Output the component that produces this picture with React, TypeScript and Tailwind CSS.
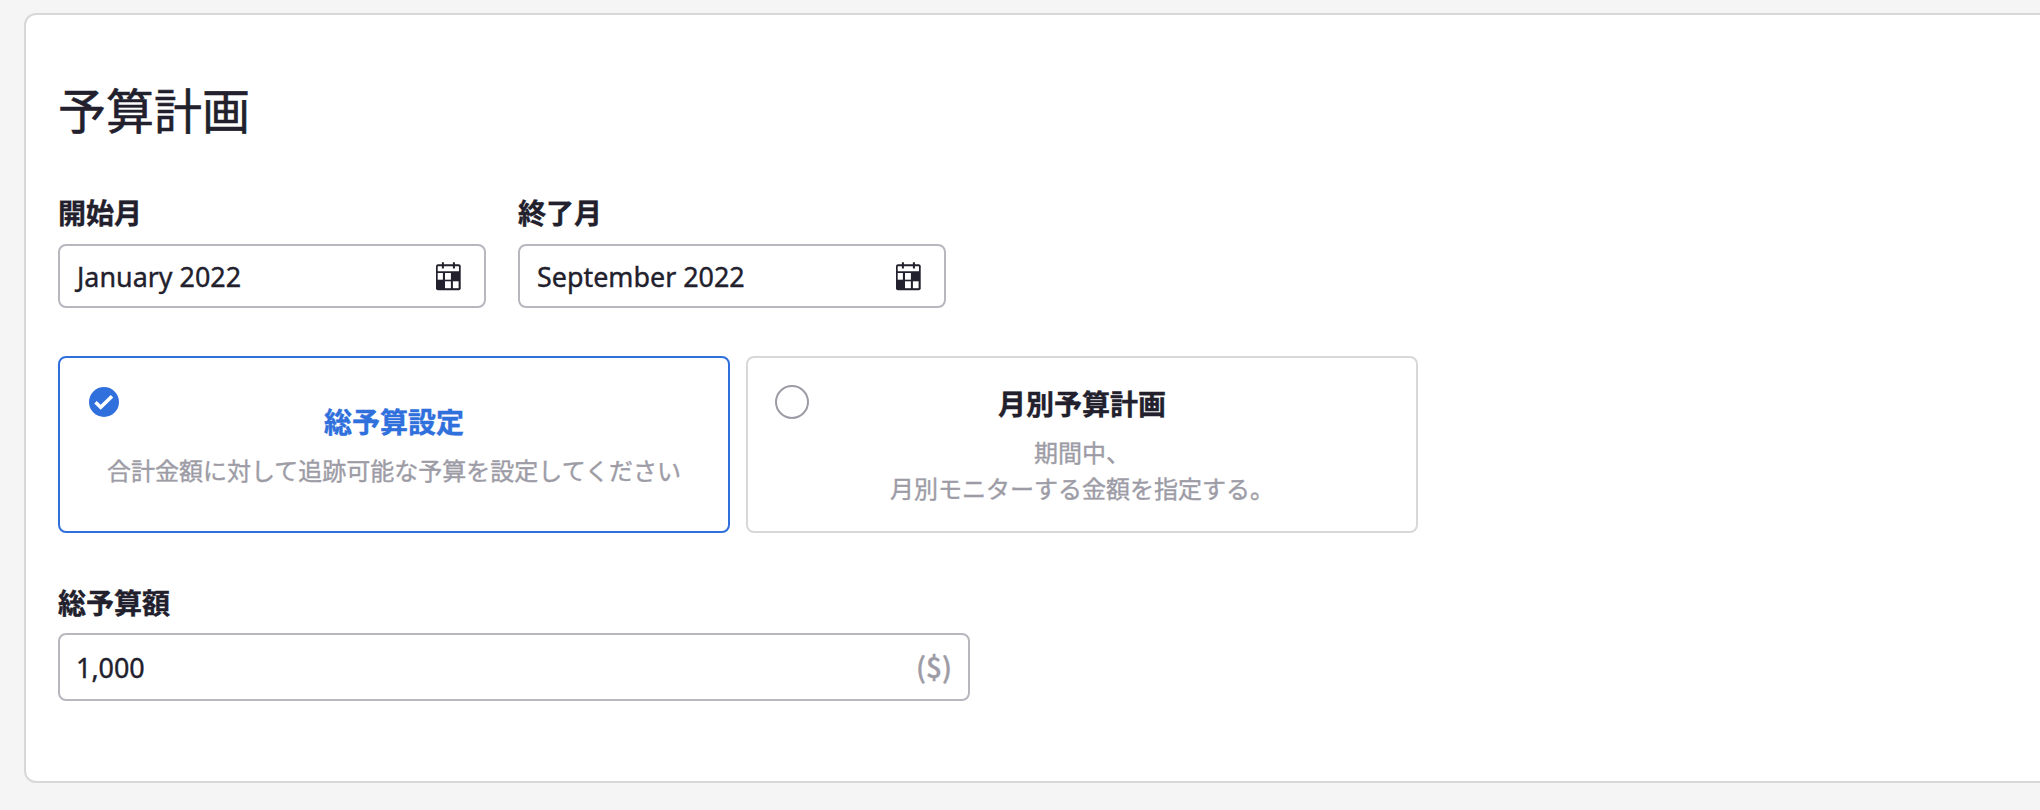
import React from 'react';

function CalendarIcon() {
  return (
    <svg width="25" height="29" viewBox="0 0 25 29" className="shrink-0">
      <rect x="0" y="2.300" width="24.700" height="26" rx="2" fill="#21202c" />
      <g fill="#fff">
        <rect x="1.700" y="4.200" width="21.300" height="5" rx="0.500" />
        <rect x="1.700" y="11" width="5.200" height="6.700" />
        <rect x="9" y="11" width="5.900" height="6.700" />
        <rect x="9" y="19.300" width="5.900" height="6.900" />
        <rect x="16.900" y="19.300" width="5.700" height="6.900" />
      </g>
      <path d="M6.900 0.300v6.200M17.900 0.300v6.200" stroke="#21202c" strokeWidth="2" />
    </svg>
  );
}

function MonthField({ label, value }: { label: string; value: string }) {
  return (
    <div className="w-[428px]">
      <div className="h-[48px] text-[28px] leading-[34px] font-bold">{label}</div>
      <div className="flex h-[64px] items-center justify-between rounded-[8px] border-2 border-[#b8b7bf] pr-[23px] pl-[17px] text-[28px]">
        <span className="origin-left scale-x-[0.96]">{value}</span>
        <CalendarIcon />
      </div>
    </div>
  );
}

export default function App() {
  return (
    <div
      lang="ja"
      className="h-[810px] w-[2040px] overflow-hidden bg-[#f5f5f5] pt-[13px] pl-[24px] font-['Noto_Sans','Noto_Sans_CJK_JP',sans-serif] text-[#21202c] [-webkit-text-stroke:0.4px]"
    >
      <main className="h-[770px] w-[2100px] rounded-[12px] border-2 border-[#d8d8d9] bg-white px-[32px] pt-[60px]">
        <h1 className="h-[121px] text-[48px] leading-[72px] [-webkit-text-stroke:0.6px]">予算計画</h1>
        <div className="flex gap-[32px]">
          <MonthField label="開始月" value="January 2022" />
          <MonthField label="終了月" value="September 2022" />
        </div>
        <div className="mt-[48px] flex gap-[16px] text-center">
          <div className="relative flex h-[177px] w-[672px] flex-col items-center justify-center rounded-[8px] border-2 border-[#3070dc] pt-px">
            <svg width="30" height="30" viewBox="0 0 30 30" className="absolute top-[29px] left-[29px]">
              <circle cx="15" cy="15" r="15" fill="#3070dc" />
              <path d="M6.500 15.200l5.200 5L23 9.200" fill="none" stroke="#fff" strokeWidth="3.600" />
            </svg>
            <div className="text-[28px] leading-[42px] font-bold text-[#3070dc]">総予算設定</div>
            <div className="mt-[10px] text-[24px] leading-[36px] text-[#9d9ca6]">
              合計金額に対して追跡可能な予算を設定してください
            </div>
          </div>
          <div className="relative flex h-[177px] w-[672px] flex-col items-center justify-center rounded-[8px] border-2 border-[#d8d8d9] pt-px">
            <span className="absolute top-[27px] left-[27px] size-[34px] rounded-full border-2 border-[#9d9ca6]" />
            <div className="text-[28px] leading-[42px] font-bold">月別予算計画</div>
            <div className="mt-[10px] text-[24px] leading-[36px] text-[#9d9ca6]">
              期間中、
              <br />
              月別モニターする金額を指定する。
            </div>
          </div>
        </div>
        <div className="mt-[52px] h-[48px] text-[28px] leading-[36px] font-bold">総予算額</div>
        <div className="flex h-[68px] w-[912px] items-center justify-between rounded-[8px] border-2 border-[#b8b7bf] px-[16px] text-[28px]">
          <span className="origin-left scale-x-[0.96]">1,000</span>
          <span className="pb-[3px] font-['Noto_Sans_CJK_JP',sans-serif] font-medium text-[#9d9ca6]">($)</span>
        </div>
      </main>
    </div>
  );
}
